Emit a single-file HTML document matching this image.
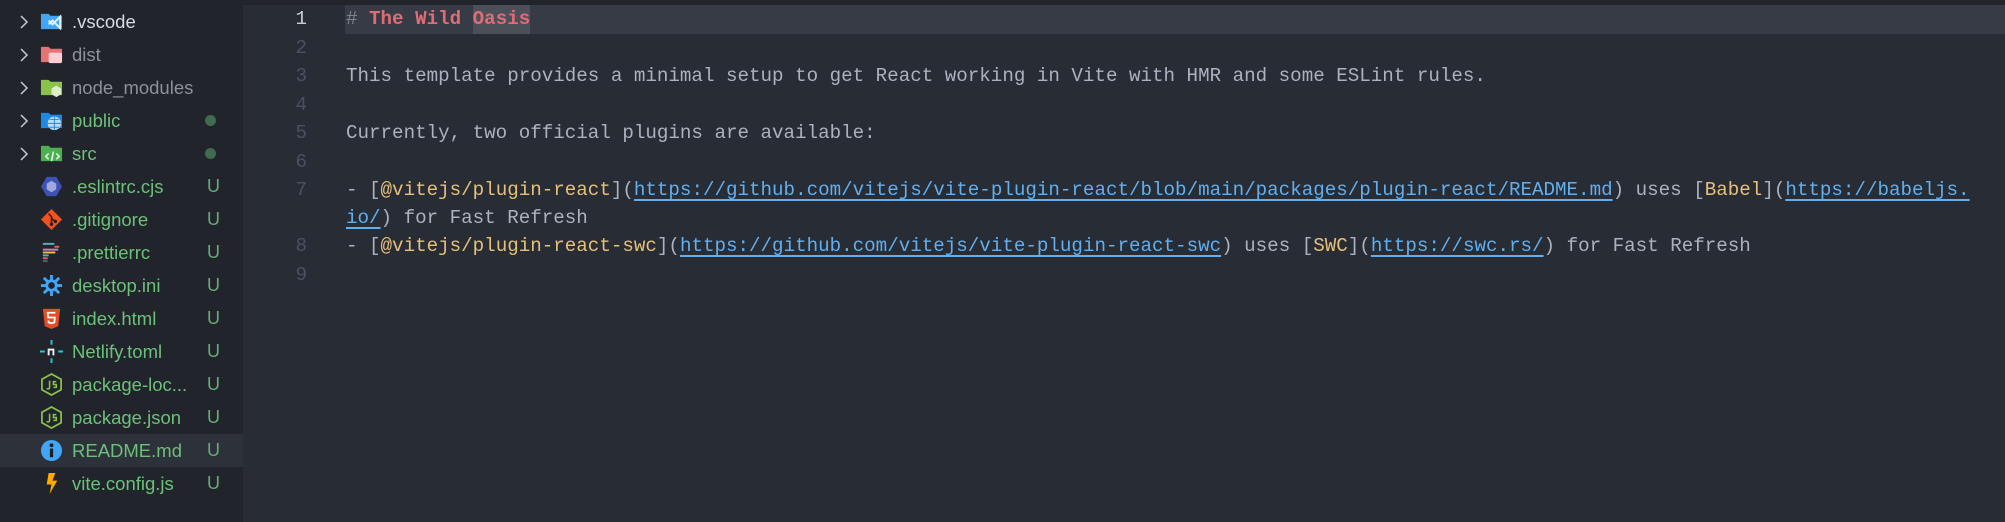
<!DOCTYPE html>
<html><head><meta charset="utf-8"><style>
*{margin:0;padding:0;box-sizing:border-box}
body{width:2005px;height:522px;background:#282c34;overflow:hidden;position:relative;font-family:"Liberation Sans",sans-serif}
#side{position:absolute;left:0;top:0;width:243px;height:522px;background:#21252b}
.row{position:absolute;left:0;width:243px;height:33px;font-size:18.5px;line-height:33px;color:#6cc07a}
.row .chev{position:absolute;left:17px;top:10px;width:14px;height:14px}
.row svg.ic{position:absolute;left:40px;top:5px;width:23px;height:23px}
.row .t{position:absolute;left:72px;top:0;white-space:nowrap}
.row .u{position:absolute;left:207px;top:0;color:#6aa97a;font-size:18px}
.row .dot{position:absolute;left:205px;top:11px;width:11px;height:11px;border-radius:50%;background:#3f6b4e}
#top{position:absolute;left:243px;top:0;right:0;height:5px;background:#21252b}
#ed{position:absolute;left:243px;top:5px;right:0;font-family:"Liberation Mono",monospace;font-size:19.2px;color:#abb2bf}
.ln{position:absolute;left:0;width:64px;text-align:right;color:#495162;height:28.5px;line-height:28.5px}
.cl{position:absolute;left:103px;white-space:pre;height:28.5px;line-height:28.5px}
.r{color:#e06c75;font-weight:bold}.g{color:#7f848e}.y{color:#e5c07b}.b{color:#61afef;text-decoration:underline;text-decoration-thickness:2px;text-underline-offset:4px}
</style></head><body>
<div id="side">
<div class="row" style="top:5px;color:#d7dae0"><svg class="chev" viewBox="0 0 14 14"><path d="M4 1l6 6-6 6" stroke="#c5c8ce" stroke-width="1.5" fill="none"/></svg><svg class="ic" viewBox="0 0 24 24"><path d="M1 4h8l2 2h12v14H1z" fill="#42a5f5"/><path d="M9 11l4 4 8-8v12l-8-8-4 4" stroke="#e3f2fd" stroke-width="2" fill="none"/></svg><span class="t">.vscode</span></div>
<div class="row" style="top:38px;color:#8b9099"><svg class="chev" viewBox="0 0 14 14"><path d="M4 1l6 6-6 6" stroke="#c5c8ce" stroke-width="1.5" fill="none"/></svg><svg class="ic" viewBox="0 0 24 24"><path d="M1 4h8l2 2h12v14H1z" fill="#e57373"/><rect x="9" y="10" width="14" height="11" rx="2" fill="#ffcdd2"/></svg><span class="t">dist</span></div>
<div class="row" style="top:71px;color:#8b9099"><svg class="chev" viewBox="0 0 14 14"><path d="M4 1l6 6-6 6" stroke="#c5c8ce" stroke-width="1.5" fill="none"/></svg><svg class="ic" viewBox="0 0 24 24"><path d="M1 4h8l2 2h12v14H1z" fill="#8bc34a"/><path d="M17 10l5 3v6l-5 3-5-3v-6z" fill="#dcedc8"/></svg><span class="t">node_modules</span></div>
<div class="row" style="top:104px"><svg class="chev" viewBox="0 0 14 14"><path d="M4 1l6 6-6 6" stroke="#c5c8ce" stroke-width="1.5" fill="none"/></svg><svg class="ic" viewBox="0 0 24 24"><path d="M1 4h8l2 2h12v14H1z" fill="#1e88e5"/><circle cx="15" cy="15" r="7" fill="#bbdefb"/><path d="M8 15h14M15 8v14M10 11h10M10 19h10" stroke="#1e88e5" stroke-width="1"/></svg><span class="t">public</span><span class="dot"></span></div>
<div class="row" style="top:137px"><svg class="chev" viewBox="0 0 14 14"><path d="M4 1l6 6-6 6" stroke="#c5c8ce" stroke-width="1.5" fill="none"/></svg><svg class="ic" viewBox="0 0 24 24"><path d="M1 4h8l2 2h12v14H1z" fill="#4caf50"/><path d="M9 12l-3 3 3 3M17 12l3 3-3 3M14 10l-2 10" stroke="#e8f5e9" stroke-width="1.6" fill="none"/></svg><span class="t">src</span><span class="dot"></span></div>
<div class="row" style="top:170px"><svg class="ic" viewBox="0 0 24 24"><path d="M7 2h10l6 10-6 10H7L1 12z" fill="#3f51b5"/><path d="M12 6l5 3v6l-5 3-5-3V9z" fill="#9fa8da"/></svg><span class="t">.eslintrc.cjs</span><span class="u">U</span></div>
<div class="row" style="top:203px"><svg class="ic" viewBox="0 0 24 24"><path d="M12 1l11 11-11 11L1 12z" fill="#f4511e"/><path d="M9 6l3 3v8M12 11l4 3" stroke="#222" stroke-width="1.6" fill="none"/><circle cx="12" cy="17" r="1.8" fill="#222"/><circle cx="16" cy="14" r="1.8" fill="#222"/></svg><span class="t">.gitignore</span><span class="u">U</span></div>
<div class="row" style="top:236px"><svg class="ic" viewBox="0 0 24 24"><rect x="3" y="2" width="12" height="2" fill="#56b3b4"/><rect x="15" y="5" width="5" height="2" fill="#ea5e5e"/><rect x="3" y="8" width="16" height="2" fill="#bf85bf"/><rect x="3" y="11" width="13" height="2" fill="#f7ba3e"/><rect x="3" y="14" width="6" height="2" fill="#56b3b4"/><rect x="3" y="17" width="5" height="2" fill="#ea5e5e"/><rect x="3" y="20" width="5" height="2" fill="#4d616e"/></svg><span class="t">.prettierrc</span><span class="u">U</span></div>
<div class="row" style="top:269px"><svg class="ic" viewBox="0 0 24 24"><circle cx="12" cy="12" r="5" fill="none" stroke="#42a5f5" stroke-width="3"/><path d="M12 1v5M12 18v5M1 12h5M18 12h5M4 4l4 4M16 16l4 4M4 20l4-4M16 8l4-4" stroke="#42a5f5" stroke-width="3"/></svg><span class="t">desktop.ini</span><span class="u">U</span></div>
<div class="row" style="top:302px"><svg class="ic" viewBox="0 0 24 24"><path d="M3 2h18l-2 18-7 3-7-3z" fill="#e44d26"/><path d="M16 6H8l.5 5h7l-.5 5-3 1-3-1-.2-2" stroke="#fff" stroke-width="1.8" fill="none"/></svg><span class="t">index.html</span><span class="u">U</span></div>
<div class="row" style="top:335px"><svg class="ic" viewBox="0 0 24 24"><path d="M0 12h5M19 12h5M12 0v5M12 19v5" stroke="#26c6da" stroke-width="2"/><path d="M9 16v-6h5v6" stroke="#eee" stroke-width="2" fill="none"/></svg><span class="t">Netlify.toml</span><span class="u">U</span></div>
<div class="row" style="top:368px"><svg class="ic" viewBox="0 0 24 24"><path d="M12 1l10 5.5v11L12 23 2 17.5v-11z" fill="none" stroke="#8bc34a" stroke-width="1.8"/><path d="M10 8v7c0 2-2 2-3 1M17 9h-3v3h3v3h-3" stroke="#8bc34a" stroke-width="1.6" fill="none"/></svg><span class="t">package-loc...</span><span class="u">U</span></div>
<div class="row" style="top:401px"><svg class="ic" viewBox="0 0 24 24"><path d="M12 1l10 5.5v11L12 23 2 17.5v-11z" fill="none" stroke="#8bc34a" stroke-width="1.8"/><path d="M10 8v7c0 2-2 2-3 1M17 9h-3v3h3v3h-3" stroke="#8bc34a" stroke-width="1.6" fill="none"/></svg><span class="t">package.json</span><span class="u">U</span></div>
<div class="row" style="top:434px;background:#2c313a"><svg class="ic" viewBox="0 0 24 24"><circle cx="12" cy="12" r="11" fill="#42a5f5"/><rect x="10.3" y="10" width="3.4" height="9" fill="#1a1d22"/><circle cx="12" cy="6.5" r="2" fill="#1a1d22"/></svg><span class="t">README.md</span><span class="u">U</span></div>
<div class="row" style="top:467px"><svg class="ic" viewBox="0 0 24 24"><path d="M9 1h7l-3 8h5L10 23l2-10H7z" fill="#ffab00"/></svg><span class="t">vite.config.js</span><span class="u">U</span></div>
</div>
<div id="top"></div>
<div id="ed">
<div style="position:absolute;left:102px;top:0;right:0;height:29px;background:#363b45"></div>
<div style="position:absolute;left:230px;top:0;width:57px;height:29px;background:#4a4f58"></div>
<div class="ln" style="top:0;color:#c8ccd4">1</div><div class="cl" style="top:0"><span class="g"># </span><span class="r">The Wild Oasis</span></div>
<div class="ln" style="top:28.5px">2</div>
<div class="ln" style="top:57px">3</div><div class="cl" style="top:57px">This template provides a minimal setup to get React working in Vite with HMR and some ESLint rules.</div>
<div class="ln" style="top:85.5px">4</div>
<div class="ln" style="top:114px">5</div><div class="cl" style="top:114px">Currently, two official plugins are available:</div>
<div class="ln" style="top:142.5px">6</div>
<div class="ln" style="top:171px">7</div><div class="cl" style="top:171px">- [<span class="y">@vitejs/plugin-react</span>](<span class="b">https://github.com/vitejs/vite-plugin-react/blob/main/packages/plugin-react/README.md</span>) uses [<span class="y">Babel</span>](<span class="b">https://babeljs.</span></div>
<div class="cl" style="top:199px"><span class="b">io/</span>) for Fast Refresh</div>
<div class="ln" style="top:227px">8</div><div class="cl" style="top:227px">- [<span class="y">@vitejs/plugin-react-swc</span>](<span class="b">https://github.com/vitejs/vite-plugin-react-swc</span>) uses [<span class="y">SWC</span>](<span class="b">https://swc.rs/</span>) for Fast Refresh</div>
<div class="ln" style="top:255.5px">9</div>
</div>
</body></html>
